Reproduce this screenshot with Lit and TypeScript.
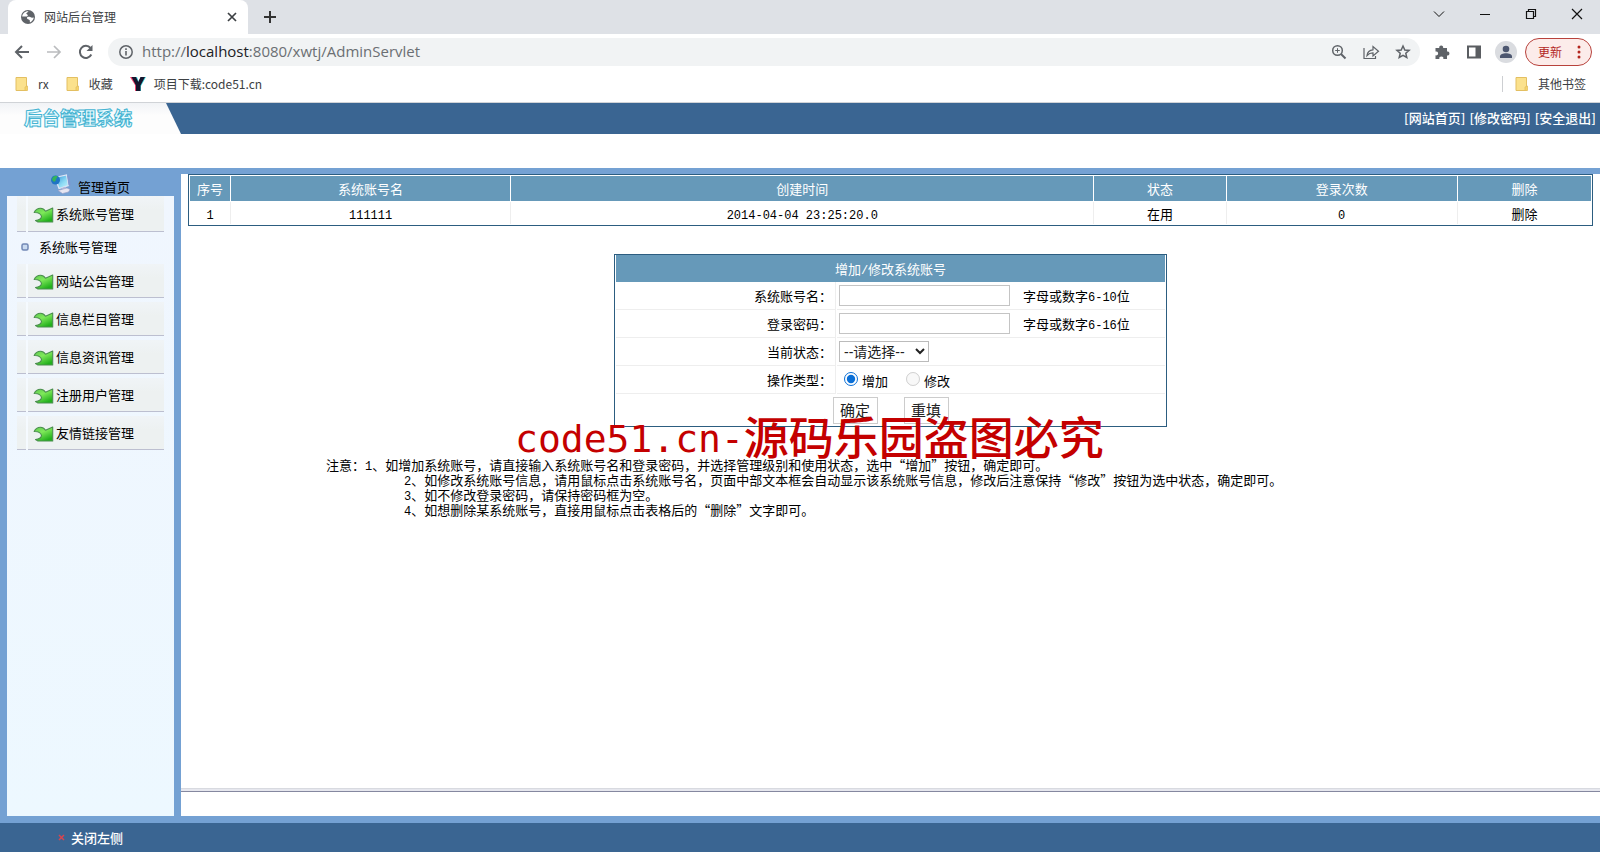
import { LitElement, html, css, svg } from "lit";
import { customElement, property, state } from "lit/decorators.js";
import { classMap } from "lit/directives/class-map.js";

const mono = (t: string) => html`<span class="mono">${t}</span>`;

const folder = html`<svg class="folder" viewBox="0 0 14 16" aria-hidden="true">
  <path d="M1 1.500h10.500v13H1z" fill="#fbe18c" stroke="#e3bf62" stroke-width="1" />
  <path d="M10 11l2.500-1v4.500H10z" fill="#f7d468" stroke="#e3bf62" stroke-width=".8" />
</svg>`;

const line = (w: number, h: number, body: unknown) =>
  html`<svg width=${w} height=${h} viewBox="0 0 ${w} ${h}" fill="none" stroke="currentColor" aria-hidden="true">${body}</svg>`;

@customElement("browser-chrome")
export class BrowserChrome extends LitElement {
  static styles = css`
    :host { display: block; font: 12px/16px "Noto Sans CJK SC", sans-serif; color: #3c4043; }
    button { border: 0; background: none; padding: 0; margin: 0; color: inherit; font: inherit; display: grid; place-items: center; }
    svg { display: block; }
    .tabs { display: flex; height: 34px; background: #dee1e6; padding-left: 8px; align-items: stretch; }
    .tab { display: flex; align-items: center; width: 240px; background: #fff; border-radius: 8px 8px 0 0; padding: 0 10px 0 12px; box-sizing: border-box; }
    .title { flex: 1; margin-left: 8px; }
    .new { width: 44px; color: #333; }
    .win { display: flex; margin-left: auto; color: #111; align-items: flex-start; }
    .win button { width: 46px; height: 28px; }
    .bar { display: flex; height: 36px; align-items: center; padding: 0 8px 0 12px; color: #5f6368; }
    .nav { width: 20px; height: 28px; margin-right: 12px; }
    .nav.off { color: #babcbe; }
    .address { flex: 1; display: flex; height: 28px; align-items: center; background: #f1f3f4; border-radius: 14px; padding: 0 9px 0 8px; gap: 15px; margin-right: 14px; }
    .url { flex: 1; min-width: 0; font: 15px/20px "Open Sans", sans-serif; color: #6b6f73; white-space: nowrap; margin-left: -9px; padding-bottom: 2px; }
    .url b { font-weight: 400; color: #202124; }
    .tools { display: flex; align-items: center; gap: 16px; }
    .avatar { width: 22px; height: 22px; border-radius: 50%; background: #dadce0; margin: 0 8px 0 -3px; overflow: hidden; }
    .update { height: 28px; width: 67px; border: 1px solid #b8423c; border-radius: 14px; background: #fcecea; color: #b3261e; display: flex; align-items: center; justify-content: space-between; padding: 0 10px 0 12px; box-sizing: border-box; }
    .marks { display: flex; height: 32px; align-items: center; padding: 0 14px 0 15px; border-bottom: 1px solid #d0d3d7; }
    .marks a { display: flex; align-items: center; color: inherit; text-decoration: none; padding-bottom: 4px; }
    .folder { width: 14px; height: 16px; margin-right: 9px; }
    .gap { margin-right: 17px; }
    .fav { margin-right: 8px; }
    .other { margin-left: auto; }
    .marks .other::before { content: ""; width: 1px; height: 16px; background: #cdcfd2; margin-right: 12px; }
  `;
  render() {
    return html`
      <div class="tabs">
        <div class="tab">
          <svg width="16" height="16" viewBox="0 0 16 16" aria-hidden="true">
            <circle cx="8" cy="8" r="7" fill="#5f6368" />
            <path d="M8.500 2.200c-.5 1.500-2 1.200-2.200 2.400-.1 1 1.600.6 1.500 2-.2 1.200-1.600 1-2.600.9L2.200 7.400C2.400 4.600 5 1.900 8.500 2.200zM13.800 8.500c-.3 2-1.500 4-3.800 4.900-.4-1 .2-1.700-.5-2.500-.8-.8-2.500-.4-2.600-1.800 0-1.200 1.200-1.500 2.500-1.400 1.300 0 1.500.9 2.600 1z" fill="#fff" />
          </svg>
          <span class="title">网站后台管理</span>
          <button aria-label="关闭标签页">${line(12, 12, svg`<path d="M2 2l8 8M10 2l-8 8" stroke-width="1.700" />`)}</button>
        </div>
        <button class="new" aria-label="新标签页">${line(14, 14, svg`<path d="M7 1v12M1 7h12" stroke-width="2" />`)}</button>
        <div class="win">
          <button aria-label="搜索标签页">${line(12, 12, svg`<path d="M1 3.500l5 5 5-5" />`)}</button>
          <button aria-label="最小化">${line(12, 12, svg`<path d="M1 6.500h10" />`)}</button>
          <button aria-label="还原">${line(12, 12, svg`<path d="M1.500 3.500h7v7h-7zM3.500 3.500v-2h7v7h-2" stroke-width="1.200" />`)}</button>
          <button aria-label="关闭">${line(12, 12, svg`<path d="M1 1l10 10M11 1L1 11" stroke-width="1.200" />`)}</button>
        </div>
      </div>
      <div class="bar">
        <button class="nav" aria-label="后退">${line(16, 16, svg`<path d="M15 8H2M8 2L2 8l6 6" stroke-width="2" />`)}</button>
        <button class="nav off" aria-label="前进">${line(16, 16, svg`<path d="M1 8h13M8 2l6 6-6 6" stroke-width="1.700" />`)}</button>
        <button class="nav" aria-label="刷新">${line(16, 16, svg`<path d="M13.300 10.500A6 6 0 1 1 12.500 4" stroke-width="2" /><path d="M14.500 1v6H8.500z" fill="currentColor" stroke="none" />`)}</button>
        <div class="address">
          ${line(20, 16, svg`<circle cx="10" cy="8" r="6.200" stroke-width="1.500" /><path d="M10 7v4.500M10 4.200v1.700" stroke-width="1.600" />`)}
          <span class="url">http://<b>localhost</b>:8080/xwtj/AdminServlet</span>
          ${line(16, 16, svg`<circle cx="6.500" cy="6.500" r="4.800" stroke-width="1.500" /><path d="M10 10l4.500 4.500" stroke-width="2" /><path d="M4.200 6.500h4.600M6.500 4.200v4.600" />`)}
          ${line(18, 16, svg`<path d="M2 4v10.500h11.500V12" stroke-width="1.200" /><path d="M5 11.500c.5-4 2.500-5.500 6-5.700V2.500l5.500 4.700L11 12V8.800c-2.700 0-4.500.9-6 2.700z" stroke-width="1.200" />`)}
          ${line(16, 16, svg`<path d="M8 2l1.800 4 4.300.4-3.300 2.900 1 4.200L8 11.300l-3.800 2.200 1-4.200L1.900 6.400 6.200 6z" stroke-width="1.500" />`)}
        </div>
        <div class="tools">
          <svg width="16" height="16" viewBox="0 0 16 16" aria-hidden="true"><path d="M1.500 4H5.300a2 2 0 1 1 3.800 0H13v3.600a2 2 0 1 1 0 3.900V15H9.300a2 2 0 1 0-3.900 0H1.500V11.300a2 2 0 1 0 0-3.800z" fill="#5f6368" /></svg>
          <svg width="16" height="16" viewBox="0 0 16 16" aria-hidden="true"><path d="M1 1.500h14v13H1zM3 3.500v9h6.500v-9z" fill="#5a5d61" fill-rule="evenodd" /></svg>
          <div class="avatar"><svg width="22" height="22" viewBox="0 0 22 22" aria-hidden="true"><circle cx="11" cy="8" r="3.300" fill="#4d5770" /><path d="M5 17v-1.500c0-2 3-3.200 6-3.200s6 1.200 6 3.200V17z" fill="#4d5770" /></svg></div>
        </div>
        <button class="update">更新
          <svg width="4" height="14" viewBox="0 0 4 14" fill="#b3261e" aria-hidden="true"><circle cx="2" cy="2" r="1.500" /><circle cx="2" cy="7" r="1.500" /><circle cx="2" cy="12" r="1.500" /></svg>
        </button>
      </div>
      <div class="marks">
        <a class="gap" href="#">${folder}rx</a>
        <a class="gap" href="#">${folder}收藏</a>
        <a href="#"><svg class="fav" width="16" height="16" viewBox="0 0 16 16" aria-hidden="true">
          <path d="M0 1h5l3 5 3-5h4l-5 8v6H5V9z" fill="#f0426d" /><path d="M3 1h4l2 5 2-5h5l-5 9v5H7v-5z" fill="#3fd6e0" /><path d="M1.500 1H6l2.300 5L10.500 1H15l-4.500 8.500V15H6V9.500z" fill="#15152d" />
        </svg>项目下载:code51.cn</a>
        <a class="other" href="#">${folder}其他书签</a>
      </div>
    `;
  }
}

@customElement("side-menu")
export class SideMenu extends LitElement {
  @property({ type: Array }) items: string[] = [];
  @property({ type: Array }) subItems: string[] = [];
  @state() private open = 0;
  static styles = css`
    :host { display: flex; flex-direction: column; width: 167px; flex: none; font: 13px/20px "Noto Sans CJK SC", sans-serif; color: #000; }
    .home { display: flex; height: 28px; align-items: flex-start; padding: 6px 0 0 43px; box-sizing: border-box; gap: 6px; }
    .home svg { flex: none; }
    a { color: inherit; text-decoration: none; }
    .home a { padding-top: 3px; }
    nav { flex: 1; background: linear-gradient(#f0f6fe, #edf8ff); padding: 0 10px; }
    .item {
      display: flex; align-items: center; width: 100%; height: 34px; margin: 0 0 4px; padding: 0 0 0 16px; border: 0;
      background:
        linear-gradient(#f5faff, #f5faff) 9px 0 / 2px 100% no-repeat,
        linear-gradient(#bcbfd0, #bcbfd0) 0 100% / 100% 1px no-repeat,
        linear-gradient(#f0f4f7, #edf1f1 40%, #edf1f1);
      font: inherit; color: inherit; gap: 2px;
    }
    .item.first { height: 36px; margin: 0; }
    .sub { display: flex; align-items: center; height: 30px; padding: 0 0 2px 4px; gap: 10px; }
  `;
  render() {
    return html`
      <div class="home">
        <svg width="22" height="20" viewBox="0 0 22 20" aria-hidden="true">
          <defs><linearGradient id="screen" x1="0" y1="0" x2="1" y2="1"><stop offset="0" stop-color="#2f8fd8" /><stop offset=".6" stop-color="#8fdcf4" /><stop offset="1" stop-color="#c9f2fb" /></linearGradient></defs>
          <path d="M5 3.500L16.500 1l2 10.500L9 14.500z" fill="url(#screen)" stroke="#dfe6f5" stroke-width="1.200" />
          <path d="M17 1l2.500 1.500 1 8.500-2 .5z" fill="#7f97cf" />
          <circle cx="5.500" cy="6" r="4.500" fill="#1f74c4" /><path d="M2 5c1-3 4-4 5.500-2.700 0 2-1.700 2-1.700 3.700S3 9 2 5z" fill="#35b35a" />
          <path d="M11.500 14l4-1.200 1.500 2.700-4 1.500z" fill="#b7bcdc" />
          <path d="M8 16.500l9-2.500 3 1.500-1.500 2.500-6 1.500z" fill="#e6e6f2" stroke="#9a9dc4" stroke-width=".6" />
        </svg>
        <a href="#">管理首页</a>
      </div>
      <nav>
        ${this.items.map((t, i) => html`
          <button class=${classMap({ item: true, first: i === 0 })} @click=${() => (this.open = i)}>
            <svg width="21" height="18" viewBox="0 0 21 18" aria-hidden="true">
              <defs><linearGradient id="leaf" x1="0" y1="0" x2=".6" y2="1"><stop offset="0" stop-color="#5fc852" /><stop offset=".45" stop-color="#7fe95a" /><stop offset="1" stop-color="#22b01c" /></linearGradient></defs>
              <path d="M1.200 7.500C2.500 4.500 5 3.200 7.500 3.200c2.200 0 3.800 1.200 5 3L19.700 3v14H5L2.500 15.500c3.500-.3 5.700-1.800 6-3.800C8 8.800 5.500 7.300 1.200 7.500z" fill="url(#leaf)" stroke="#4b8f4e" stroke-width="1.100" stroke-linejoin="round" />
            </svg>${t}
          </button>
          ${i === this.open ? this.subItems.map((c) => html`<div class="sub">
            <svg width="8" height="8" viewBox="0 0 8 8" aria-hidden="true"><rect x="1" y="1" width="6" height="6" rx="1.500" fill="#c9daf0" stroke="#7188b5" stroke-width="1.500" /></svg>
            <a href="#">${c}</a></div>`) : ""}`)}
      </nav>
    `;
  }
}

@customElement("account-panel")
export class AccountPanel extends LitElement {
  static styles = css`
    :host { display: block; flex: 1; font: 13px/15px "Noto Sans CJK SC", sans-serif; color: #000; }
    .mono { font-family: "Liberation Mono", monospace; font-size: 12px; line-height: 0; }
    table { border: 1px solid #2c5d80; border-collapse: separate; background: #fff; }
    th { background: #6699b9; color: #fff; font-weight: 400; }
    .list { margin: 0 7px; width: calc(100% - 14px); border-spacing: 1px; table-layout: fixed; }
    .list th { height: 25px; padding: 0; }
    .list td { height: 22px; padding: 0; text-align: center; box-shadow: 1px 0 #eee; }
    .list td:last-child { box-shadow: none; }
    .c1 { width: 40px; } .c2 { width: 20%; } .c3 { width: 41.700%; } .c4 { width: 9.400%; } .c5 { width: 16.500%; }
    a { color: inherit; text-decoration: none; }
    .zone { position: relative; }
    form { margin: 28px auto 0; width: 553px; }
    .edit { width: 100%; border-spacing: 1px 0; }
    .edit th { height: 27px; padding: 0; }
    .edit td { height: 27px; padding: 0; border-bottom: 1px solid #eee; }
    .edit .name { width: 216px; text-align: right; padding-right: 3px; border-right: 1px solid #eee; }
    .edit .val { padding-left: 2px; }
    .row { display: flex; align-items: center; gap: 13px; }
    .text { width: 171px; height: 21px; box-sizing: border-box; border: 1px solid #c4c4c4; background: #fff; padding: 0 4px; margin: 0; font: inherit; }
    select { width: 90px; height: 21px; box-sizing: border-box; border: 1px solid #bbb; background: #fff; padding: 0; margin: 0; font: 14px "Liberation Sans", "Noto Sans CJK SC", sans-serif; color: #222; }
    .radios { display: flex; align-items: center; padding-left: 5px; gap: 18px; }
    .radios label { display: flex; align-items: center; gap: 4px; padding-top: 2px; }
    .radios input { width: 14px; height: 14px; margin: 0 0 3px; accent-color: #0b6fd6; }
    .edit .last { height: 32px; border: 0; }
    .actions { display: flex; justify-content: center; gap: 26px; }
    .actions button { width: 45px; height: 27px; box-sizing: border-box; border: 1px solid #ccc; background: #fff; padding: 0; font: 15px/20px "Noto Sans CJK SC", sans-serif; color: #222; }
    .stamp { position: absolute; left: 334px; top: 152px; white-space: nowrap; font-size: 45px; line-height: 60px; font-weight: 500; color: #c40000; pointer-events: none; }
    .stamp .mono { font-family: "DejaVu Sans Mono", monospace; font-size: 38px; font-weight: 400; vertical-align: 3px; }
    .notes { margin: 30px 0 0 145px; white-space: nowrap; }
    .notes p { margin: 0; padding-left: 78px; }
    .notes p.lead { padding-left: 0; }
  `;
  render() {
    return html`
      <table class="list">
        <colgroup><col class="c1" /><col class="c2" /><col class="c3" /><col class="c4" /><col class="c5" /><col /></colgroup>
        <thead><tr>${["序号", "系统账号名", "创建时间", "状态", "登录次数", "删除"].map((h) => html`<th>${h}</th>`)}</tr></thead>
        <tbody><tr>
          <td>${mono("1")}</td><td><a href="#">${mono("111111")}</a></td><td>${mono("2014-04-04 23:25:20.0")}</td>
          <td>在用</td><td>${mono("0")}</td><td><a href="#">删除</a></td>
        </tr></tbody>
      </table>
      <div class="zone">
        <form @submit=${(e: Event) => e.preventDefault()}>
          <table class="edit">
            <thead><tr><th colspan="2">增加${mono("/")}修改系统账号</th></tr></thead>
            <tbody>
              <tr><td class="name"><label for="user">系统账号名：</label></td><td class="val"><div class="row"><input class="text" id="user" type="text" /><span>字母或数字${mono("6-10")}位</span></div></td></tr>
              <tr><td class="name"><label for="pass">登录密码：</label></td><td class="val"><div class="row"><input class="text" id="pass" type="password" /><span>字母或数字${mono("6-16")}位</span></div></td></tr>
              <tr><td class="name"><label for="status">当前状态：</label></td><td class="val"><div class="row"><select id="status"><option>--请选择--</option></select></div></td></tr>
              <tr><td class="name">操作类型：</td><td class="val"><div class="radios">
                <label><input type="radio" name="op" checked />增加</label>
                <label><input type="radio" name="op" disabled />修改</label></div></td></tr>
              <tr><td class="last" colspan="2"><div class="actions"><button type="submit">确定</button><button type="reset">重填</button></div></td></tr>
            </tbody>
          </table>
        </form>
        <div class="stamp">${mono("code51.cn-")}源码乐园盗图必究</div>
      </div>
      <div class="notes">
        <p class="lead">注意：${mono("1")}、如增加系统账号，请直接输入系统账号名和登录密码，并选择管理级别和使用状态，选中“增加”按钮，确定即可。</p>
        <p>${mono("2")}、如修改系统账号信息，请用鼠标点击系统账号名，页面中部文本框会自动显示该系统账号信息，修改后注意保持“修改”按钮为选中状态，确定即可。</p>
        <p>${mono("3")}、如不修改登录密码，请保持密码框为空。</p>
        <p>${mono("4")}、如想删除某系统账号，直接用鼠标点击表格后的“删除”文字即可。</p>
      </div>
    `;
  }
}

@customElement("app-root")
export class AppRoot extends LitElement {
  static styles = css`
    :host { display: flex; flex-direction: column; min-height: 100vh; background: #fff; font: 13px/20px "Noto Sans CJK SC", sans-serif; }
    .head { display: flex; height: 31px; background: #3a6592; justify-content: space-between; align-items: stretch; margin-bottom: 34px; }
    .logo { display: flex; align-items: center; width: 182px; box-sizing: border-box; padding: 0 0 4px 24px; background: linear-gradient(#f1f3f6, #fdfdfd 40%); clip-path: polygon(0 0, 166px 0, 181px 100%, 0 100%); font-size: 18px; font-weight: 900; line-height: 24px; color: #e8fbff; -webkit-text-stroke: 1px #45b4d2; }
    .links { display: flex; align-items: center; gap: 4px; padding: 0 4px 2px 0; color: #fff; font-weight: 500; }
    .links a, .foot button { color: #fff; text-decoration: none; }
    .body { display: flex; flex: 1; background: #74a1d3; padding: 0 0 7px 7px; }
    .side { display: flex; margin-right: 7px; }
    .main { flex: 1; min-width: 0; display: flex; flex-direction: column; margin-top: 6px; background: #fff; }
    .rule { height: 2px; background: #e6e7ee; border-bottom: 1px solid #8588a0; border-top: 1px solid #d8dae0; margin-bottom: 24px; }
    .foot { display: flex; height: 29px; background: #3a6592; align-items: center; padding-left: 58px; }
    .foot button { display: flex; align-items: center; gap: 6px; border: 0; background: none; padding: 0; font: inherit; font-weight: 500; }
  `;
  @state() private sideShown = true;
  render() {
    return html`
      <browser-chrome></browser-chrome>
      <header class="head">
        <div class="logo">后台管理系统</div>
        <div class="links">${["网站首页", "修改密码", "安全退出"].map((t) => html`<a href="#">[${t}]</a>`)}</div>
      </header>
      <div class="body">
        ${this.sideShown ? html`<div class="side"><side-menu
          .items=${["系统账号管理", "网站公告管理", "信息栏目管理", "信息资讯管理", "注册用户管理", "友情链接管理"]}
          .subItems=${["系统账号管理"]}></side-menu></div>` : ""}
        <main class="main">
          <account-panel></account-panel>
          <div class="rule"></div>
        </main>
      </div>
      <footer class="foot">
        <button @click=${() => (this.sideShown = !this.sideShown)}>
          <svg width="7" height="7" viewBox="0 0 7 7" aria-hidden="true"><path d="M1 1l5 5M6 1L1 6" stroke="#d8454f" stroke-width="1.500" /></svg>
          关闭左侧
        </button>
      </footer>
    `;
  }
}
